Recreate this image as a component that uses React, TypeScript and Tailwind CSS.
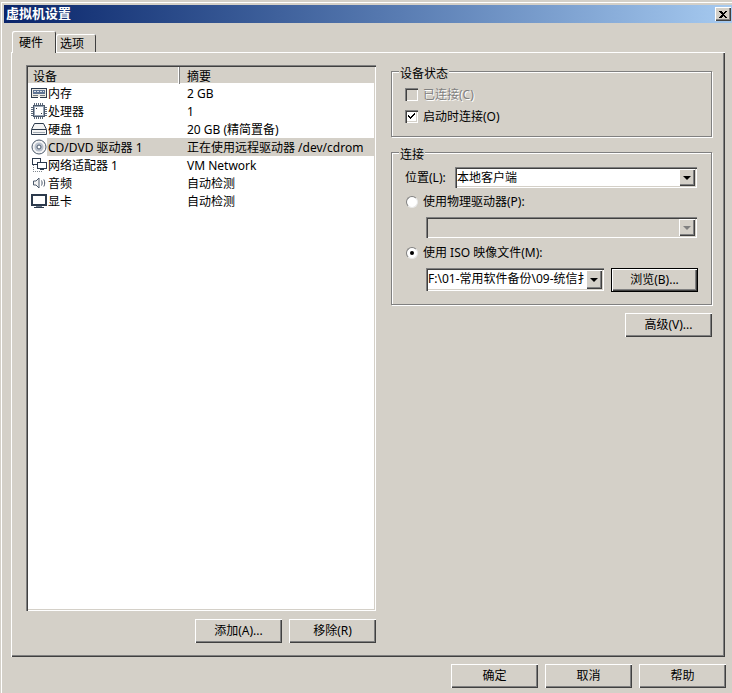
const raised =
  "shadow-[inset_1px_1px_0_#fff,inset_-1px_-1px_0_#404040,inset_-2px_-2px_0_#808080]";
const sunken =
  "shadow-[inset_1px_1px_0_#808080,inset_2px_2px_0_#404040,inset_-1px_-1px_0_#fff,inset_-2px_-2px_0_#d4d0c8]";

const rows = [
  { name: "内存", summary: "2 GB", icon: <MemoryIcon /> },
  { name: "处理器", summary: "1", icon: <CpuIcon /> },
  { name: "硬盘 1", summary: "20 GB (精简置备)", icon: <DiskIcon /> },
  { name: "CD/DVD 驱动器 1", summary: "正在使用远程驱动器 /dev/cdrom", icon: <CdIcon />, selected: true },
  { name: "网络适配器 1", summary: "VM Network", icon: <NetIcon /> },
  { name: "音频", summary: "自动检测", icon: <SoundIcon /> },
  { name: "显卡", summary: "自动检测", icon: <DisplayIcon /> },
];

function MemoryIcon() {
  return (
    <svg width="16" height="16" viewBox="0 0 16 16" fill="none" shapeRendering="crispEdges">
      <rect x="0.5" y="3.5" width="15" height="9" fill="#eceae4" stroke="#2c3a4c" />
      <path d="M2 5h12v4H2z" fill="#5f7494" />
      <path d="M3 6.500h2M6 6.500h2M9 6.500h2M12 6.500h1" stroke="#dfe4ea" />
      <path d="M2 10.500h5M9 10.500h5" stroke="#707880" />
      <path d="M7 12.500h2" stroke="#fff" />
    </svg>
  );
}

function CpuIcon() {
  return (
    <svg width="16" height="16" viewBox="0 0 16 16" fill="none" shapeRendering="crispEdges">
      <path d="M0 4.500h16M0 6.500h16M0 8.500h16M0 10.500h16M0 12.500h16M3.500 0v16M5.500 0v16M7.500 0v16M9.500 0v16M11.500 0v16" stroke="#5c6a7c" />
      <rect x="2.500" y="2.500" width="11" height="11" fill="#9aa6b6" stroke="#4c5a6c" />
      <rect x="4" y="4" width="8" height="8" fill="#fff" />
      <rect x="5" y="5" width="1" height="1" fill="#303840" />
      <rect x="10" y="10" width="1" height="1" fill="#303840" />
    </svg>
  );
}

function DiskIcon() {
  return (
    <svg width="16" height="16" viewBox="0 0 16 16" fill="none">
      <path d="M3.500 2.500h9l3 6v5h-15v-5z" fill="#f4f4f4" stroke="#2c3a4c" />
      <path d="M1 8.500h14" stroke="#2c3a4c" />
      <path d="M2 11.500h12" stroke="#a0a8b0" />
    </svg>
  );
}

function CdIcon() {
  return (
    <svg width="16" height="16" viewBox="0 0 16 16" fill="none">
      <circle cx="8" cy="8" r="7" fill="#f4f4f4" stroke="#4c5a6c" />
      <circle cx="8" cy="8" r="4.500" fill="#b8c0cc" />
      <circle cx="8" cy="8" r="2" fill="#fff" stroke="#4c5a6c" />
    </svg>
  );
}

function NetIcon() {
  return (
    <svg width="16" height="16" viewBox="0 0 16 16" fill="none" shapeRendering="crispEdges">
      <path d="M2.500 8v6.500h8V13" stroke="#808890" strokeDasharray="1 1" />
      <rect x="1.500" y="1.500" width="8" height="6" fill="#fff" stroke="#2c3a4c" />
      <rect x="6.500" y="5.500" width="9" height="6" fill="#fff" stroke="#2c3a4c" />
      <path d="M9 12.500h4" stroke="#2c3a4c" />
    </svg>
  );
}

function SoundIcon() {
  return (
    <svg width="16" height="16" viewBox="0 0 16 16" fill="none">
      <path d="M2.500 6h2.500l3-3v10l-3-3H2.500z" fill="#f4f4f4" stroke="#4c5a6c" />
      <path d="M10.500 5.500c.8 1.500.8 3.500 0 5M12.800 4.500c1.200 2.200 1.200 4.800 0 7" stroke="#4c5a6c" />
    </svg>
  );
}

function DisplayIcon() {
  return (
    <svg width="16" height="16" viewBox="0 0 16 16" fill="none" shapeRendering="crispEdges">
      <rect x="1" y="2" width="14" height="10" fill="#fff" stroke="#2c3a4c" strokeWidth="2" />
      <path d="M5 13.500h6" stroke="#6c7a8c" />
      <path d="M3 14.500h10" stroke="#2c3a4c" />
    </svg>
  );
}

function Button({ label, className = "" }: { label: string; className?: string }) {
  return (
    <div className={`flex h-[24px] w-[87px] items-center justify-center bg-[#d4d0c8] ${raised} ${className}`}>
      {label}
    </div>
  );
}

function DropArrow({ disabled }: { disabled?: boolean }) {
  return (
    <div className={`flex h-full w-[16px] shrink-0 items-center justify-center bg-[#d4d0c8] ${raised}`}>
      <div
        className={`h-0 w-0 border-x-[4px] border-t-[4px] border-x-transparent ${
          disabled ? "border-t-[#808080]" : "border-t-black"
        }`}
      />
    </div>
  );
}

function Combo({ value, disabled, className = "" }: { value?: string; disabled?: boolean; className?: string }) {
  return (
    <div className={`flex h-[21px] items-stretch p-[2px] ${disabled ? "bg-[#d4d0c8]" : "bg-white"} ${sunken} ${className}`}>
      <div className="flex-1 overflow-hidden whitespace-nowrap leading-[17px]">{value}</div>
      <DropArrow disabled={disabled} />
    </div>
  );
}

function CheckBox({ checked, disabled }: { checked?: boolean; disabled?: boolean }) {
  return (
    <div className={`flex h-[13px] w-[13px] shrink-0 items-center justify-center ${disabled ? "bg-[#d4d0c8]" : "bg-white"} ${sunken}`}>
      {checked && (
        <svg width="9" height="9" viewBox="0 0 9 9" shapeRendering="crispEdges">
          <path d="M1 3h1v1h1v1h1v-1h1v-1h1v-1h1v-1h1v2h-1v1h-1v1h-1v1h-1v1h-1v-1h-1v-1h-1z" fill="#000" />
        </svg>
      )}
    </div>
  );
}

function Radio({ checked }: { checked?: boolean }) {
  return (
    <div className="ml-[1px] flex h-[12px] w-[12px] shrink-0 items-center justify-center rounded-full border border-t-[#808080] border-l-[#808080] border-r-[#e8e8e8] border-b-[#e8e8e8] bg-white">
      {checked && <div className="h-[4px] w-[4px] rounded-full bg-black" />}
    </div>
  );
}

function Group({ title, className = "", children }: { title: string; className?: string; children: React.ReactNode }) {
  return (
    <div className={`relative border border-[#808080] pl-[13px] shadow-[1px_1px_0_#fff,inset_1px_1px_0_#fff] ${className}`}>
      {/* Caption sits on top of the etched border */}
      <span className="absolute left-[7px] top-[-5px] bg-[#d4d0c8] px-[1px] leading-[14px]">{title}</span>
      {children}
    </div>
  );
}

export default function App() {
  return (
    <div
      className="flex h-[693px] w-[732px] flex-col overflow-hidden bg-[#d4d0c8] pl-[4px] pt-[5px] text-[12px] text-black shadow-[inset_1px_0_0_#d4d0c8,inset_0_2px_0_#d4d0c8,inset_2px_0_0_#fff,inset_0_3px_0_#fff]"
      style={{ fontFamily: '"Noto Sans", "Noto Sans CJK SC", sans-serif' }}
    >
      {/* Title bar */}
      <div className="flex h-[18px] shrink-0 items-center justify-between bg-gradient-to-r from-[#0a246a] to-[#a6caf0] pl-[2px] pr-[1px]">
        <span className="text-[13px] font-bold text-white">虚拟机设置</span>
        <div className={`flex h-[14px] w-[16px] items-center justify-center bg-[#d4d0c8] ${raised}`}>
          <svg width="8" height="7" viewBox="0 0 8 7" shapeRendering="crispEdges">
            <path d="M0 0h2l2 2 2-2h2L5 3.500 8 7H6L4 5 2 7H0l3-3.500z" fill="#000" />
          </svg>
        </div>
      </div>

      {/* Tabs */}
      <div className="ml-[8px] mt-[8px] flex h-[21px] shrink-0 items-end">
        <div className="z-10 -mb-[1px] flex h-[22px] w-[44px] items-center rounded-t-[2px] bg-[#d4d0c8] pl-[7px] pt-[1px] shadow-[inset_1px_1px_0_#fff,inset_-1px_0_0_#404040]">
          硬件
        </div>
        <div className="flex h-[18px] w-[40px] items-center rounded-t-[2px] bg-[#d4d0c8] pl-[4px] pt-[2px] shadow-[inset_1px_1px_0_#fff,inset_-1px_0_0_#404040]">
          选项
        </div>
      </div>

      {/* Tab panel */}
      <div className="ml-[7px] flex h-[605px] w-[714px] shrink-0 gap-[15px] pl-[15px] pr-[13px] pt-[13px] shadow-[inset_1px_1px_0_#fff,inset_-1px_-1px_0_#404040,inset_-2px_-2px_0_#808080]">
        {/* Device list column */}
        <div className="flex w-[350px] shrink-0 flex-col">
          <div className={`h-[546px] bg-white p-[2px] ${sunken}`}>
            <div className="flex h-[17px] bg-[#d4d0c8] leading-[20px] shadow-[inset_0_-1px_0_#fff]">
              <div className="w-[152px] pl-[5px] shadow-[inset_-1px_0_0_#808080,inset_-2px_0_0_#fff]">设备</div>
              <div className="flex-1 pl-[7px]">摘要</div>
            </div>
            {rows.map((row) => (
              <div key={row.name} className="flex h-[18px] items-center">
                <div className="flex w-[152px] shrink-0 items-center pl-[3px]">
                  <span className="w-[16px] shrink-0">{row.icon}</span>
                  <span className={`flex h-[18px] flex-1 items-center pl-[1px] pt-[2px] ${row.selected ? "bg-[#d4d0c8]" : ""}`}>{row.name}</span>
                </div>
                <div className={`flex h-[18px] flex-1 items-center pl-[7px] pt-[2px] ${row.selected ? "bg-[#d4d0c8]" : ""}`}>{row.summary}</div>
              </div>
            ))}
          </div>
          <div className="mt-[8px] flex justify-end gap-[7px]">
            <Button label="添加(A)..." />
            <Button label="移除(R)" />
          </div>
        </div>

        {/* Settings column */}
        <div className="flex w-[321px] shrink-0 flex-col pt-[6px]">
          <Group title="设备状态" className="h-[66px] pt-[16px]">
            <div className="flex h-[13px] items-center gap-[5px] text-[#808080]">
              <CheckBox disabled />
              <span className="[text-shadow:1px_1px_0_#fff]">已连接(C)</span>
            </div>
            <div className="mt-[9px] flex h-[13px] items-center gap-[5px]">
              <CheckBox checked />
              <span>启动时连接(O)</span>
            </div>
          </Group>

          <Group title="连接" className="mt-[15px] h-[153px] pt-[14px]">
            <div className="flex items-center">
              <span className="w-[50px]">位置(L):</span>
              <Combo value="本地客户端" className="w-[242px]" />
            </div>
            <div className="mt-[7px] flex h-[14px] items-center gap-[5px]">
              <Radio />
              <span>使用物理驱动器(P):</span>
            </div>
            <Combo disabled className="ml-[21px] mt-[8px] w-[271px]" />
            <div className="mt-[8px] flex h-[14px] items-center gap-[5px]">
              <Radio checked />
              <span>使用 ISO 映像文件(M):</span>
            </div>
            <div className="ml-[21px] mt-[8px] flex items-start gap-[7px]">
              <Combo value="F:\01-常用软件备份\09-统信扌" className="h-[23px] w-[178px] leading-[19px]" />
              <Button label="浏览(B)..." className="border border-black" />
            </div>
          </Group>

          <div className="mt-[8px] flex justify-end">
            <Button label="高级(V)..." />
          </div>
        </div>
      </div>

      {/* Dialog buttons */}
      <div className="mt-[7px] flex w-[722px] justify-end gap-[7px]">
        <Button label="确定" />
        <Button label="取消" />
        <Button label="帮助" />
      </div>
    </div>
  );
}
